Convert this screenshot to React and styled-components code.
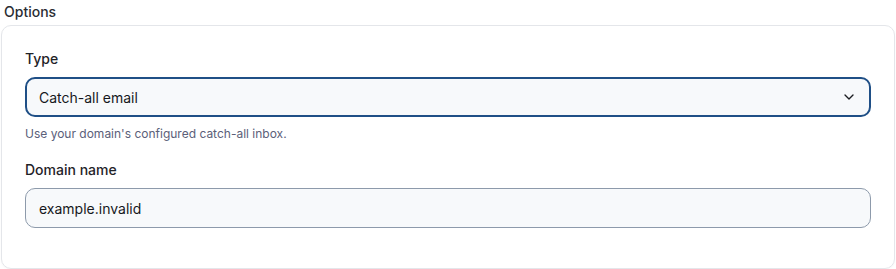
import styled, { createGlobalStyle } from "styled-components"
import { ChevronDown } from "lucide-react"

const Global = createGlobalStyle`
  body {
    margin: 0;
    background: #ffffff;
    font-family: Inter, "Noto Sans", sans-serif;
    color: #1f2328;
  }
`

const Section = styled.section`
  width: 896px;
  display: flex;
  flex-direction: column;
`

const Heading = styled.h2`
  margin: 3px 0 0 4px;
  font-size: 14px;
  font-weight: 500;
  line-height: 17px;
  color: #2a2d33;
`

const Card = styled.div`
  margin: 5px 1px 1px 1px;
  border: 1px solid #e4e6ea;
  border-radius: 10px;
  padding: 24px 23px 40px 23px;
  display: flex;
  flex-direction: column;
  box-shadow: 0 1px 2px rgba(15, 23, 42, 0.03);
`

const Field = styled.div`
  display: flex;
  flex-direction: column;
  margin-bottom: ${p => p.$gap || 0}px;
`

const Label = styled.label`
  font-size: 14px;
  font-weight: 500;
  line-height: 17px;
  color: #1f2328;
  margin-bottom: 10px;
`

const SelectBox = styled.div`
  height: 40px;
  box-sizing: border-box;
  border: 2px solid #1f4f86;
  border-radius: 10px;
  background: #f7f9fb;
  display: flex;
  align-items: center;
  justify-content: space-between;
  padding: 0 12px 0 12px;
  font-size: 14px;
  color: #16181c;
`

const Input = styled.div`
  height: 40px;
  box-sizing: border-box;
  border: 1px solid #8d9aab;
  border-radius: 10px;
  background: #f7f9fb;
  display: flex;
  align-items: center;
  padding: 0 13px;
  font-size: 14px;
  color: #16181c;
`

const Hint = styled.p`
  margin: 9px 0 0 0;
  font-size: 12px;
  line-height: 15px;
  color: #5b6079;
`

export default function App() {
  return (
    <>
      <Global />
      <Section>
        <Heading>Options</Heading>
        <Card>
          <Field $gap={20}>
            <Label>Type</Label>
            <SelectBox>
              <span>Catch-all email</span>
              <ChevronDown size={16} strokeWidth={2} color="#1b1d21" />
            </SelectBox>
            <Hint>Use your domain's configured catch-all inbox.</Hint>
          </Field>
          <Field>
            <Label>Domain name</Label>
            <Input>example.invalid</Input>
          </Field>
        </Card>
      </Section>
    </>
  )
}
